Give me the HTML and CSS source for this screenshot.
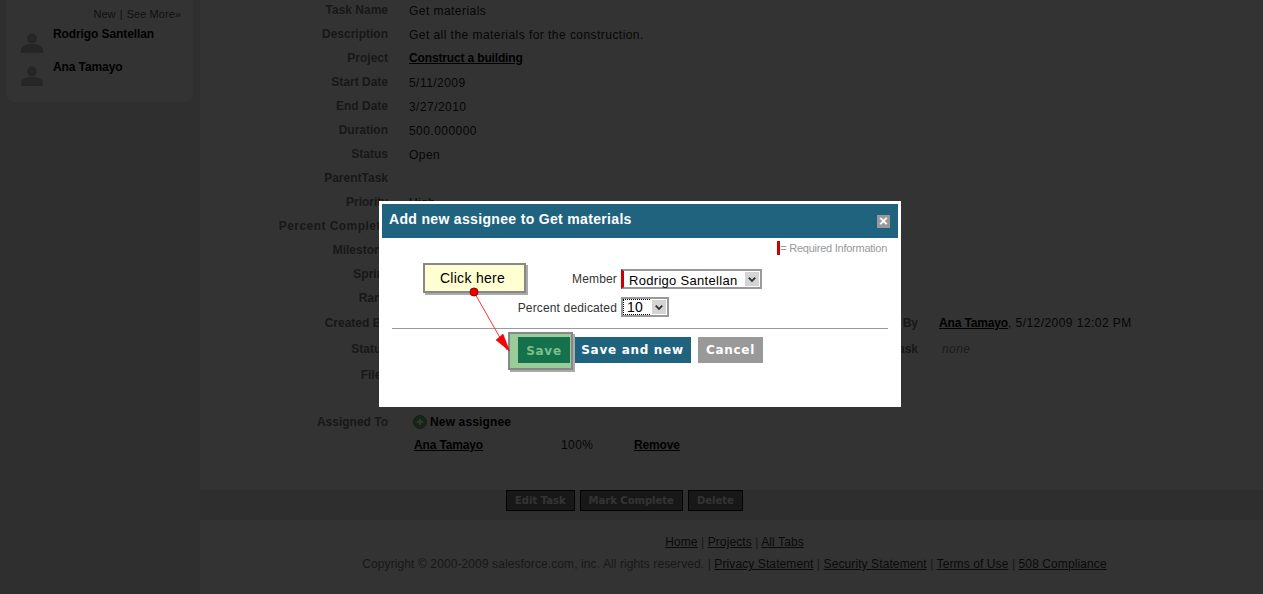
FILE: index.html
```html
<!DOCTYPE html>
<html lang="en">
<head>
<meta charset="utf-8">
<title>Get materials</title>
<link rel="stylesheet" href="styles.css">
</head>
<body>
<div class="page">
  <aside class="sidebar">
    <section class="card">
      <div class="card-links"><a>New</a> <span class="pipe">|</span> <a>See More»</a></div>
      <div class="person">
        <svg class="avatar" viewBox="0 0 24 24"><circle cx="12" cy="9.500" r="5"/><path d="M1 24v-3c0-4 4-6 11-6s11 2 11 6v3z"/></svg>
        <b>Rodrigo Santellan</b>
      </div>
      <div class="person">
        <svg class="avatar" viewBox="0 0 24 24"><circle cx="12" cy="9.500" r="5"/><path d="M1 24v-3c0-4 4-6 11-6s11 2 11 6v3z"/></svg>
        <b>Ana Tamayo</b>
      </div>
    </section>
  </aside>
  <main class="main">
    <div class="details">
      <div class="row"><span class="label">Task Name</span><span class="val">Get materials</span></div>
      <div class="row"><span class="label">Description</span><span class="val">Get all the materials for the construction.</span></div>
      <div class="row"><span class="label">Project</span><a class="link">Construct a building</a></div>
      <div class="row"><span class="label">Start Date</span><span class="val">5/11/2009</span></div>
      <div class="row"><span class="label">End Date</span><span class="val">3/27/2010</span></div>
      <div class="row"><span class="label">Duration</span><span class="val">500.000000</span></div>
      <div class="row"><span class="label">Status</span><span class="val">Open</span></div>
      <div class="row"><span class="label">ParentTask</span><span></span></div>
      <div class="row"><span class="label">Priority</span><span class="val">High</span></div>
      <div class="row"><span class="label spaced">Percent Complete</span><span></span></div>
      <div class="row"><span class="label">Milestone</span><span></span></div>
      <div class="row"><span class="label">Sprint</span><span></span></div>
      <div class="row"><span class="label">Rank</span><span></span></div>
      <div class="row tall"><span class="label">Created By</span><span></span><span class="label">Modified By</span><span><a class="link">Ana Tamayo</a>, 5/12/2009 12:02 PM</span></div>
      <div class="row tall"><span class="label">Status</span><span></span><span class="label">Parent Task</span><i class="none">none</i></div>
      <div class="row tall"><span class="label">Files</span><span></span></div>
      <div class="row assigned"><span class="label">Assigned To</span>
        <a class="new-link"><svg class="plus" viewBox="0 0 14 14"><circle cx="7" cy="7" r="6.500" class="plus-bg"/><path d="M7 4v6M4 7h6" class="plus-mark"/></svg>New assignee</a>
      </div>
      <div class="row"><span></span>
        <div class="assignee"><a class="link">Ana Tamayo</a><span>100%</span><a class="link">Remove</a></div>
      </div>
    </div>
    <div class="actions">
      <button class="action">Edit Task</button>
      <button class="action">Mark Complete</button>
      <button class="action">Delete</button>
    </div>
    <footer class="footer">
      <p><a>Home</a> | <a>Projects</a> | <a>All Tabs</a></p>
      <p>Copyright © 2000-2009 salesforce.com, inc. All rights reserved. | <a>Privacy Statement</a> | <a>Security Statement</a> | <a>Terms of Use</a> | <a>508 Compliance</a></p>
    </footer>
  </main>
</div>

<div class="overlay"></div>

<div class="modal">
  <header class="modal-head">
    <h1>Add new assignee to Get materials</h1>
    <span class="close">×</span>
  </header>
  <div class="required"><span class="req-bar"></span>= Required Information</div>
  <form class="form">
    <label class="field"><span class="field-label">Member</span>
      <span class="select member"><select><option>Rodrigo Santellan</option></select>
        <svg class="arrow" viewBox="0 0 15 15"><path d="M4 6l3.500 3.500L11 6" /></svg></span>
    </label>
    <label class="field"><span class="field-label">Percent dedicated</span>
      <span class="select percent"><select><option>10</option></select>
        <svg class="arrow" viewBox="0 0 15 15"><path d="M4 6l3.500 3.500L11 6" /></svg></span>
    </label>
    <div class="modal-buttons">
      <button type="button" class="btn save">Save</button>
      <button type="button" class="btn blue">Save and new</button>
      <button type="button" class="btn grey">Cancel</button>
    </div>
  </form>
</div>

<div class="spot"></div>
<div class="spot-text">Save</div>
<div class="callout">Click here</div>
<svg class="connector" width="60" height="75" viewBox="0 0 60 75">
  <path d="M5 4L38 62" class="conn-line"/>
  <path d="M27 52L34 46L40.500 63Z" class="conn-head"/>
  <circle cx="5" cy="4" r="4" class="conn-dot"/>
</svg>
</body>
</html>
```

FILE: styles.css
```css
* { box-sizing: border-box; }
html, body { margin: 0; height: 100%; overflow: hidden; }
body {
  font: 12px/14px "Liberation Sans", Arial, sans-serif;
  letter-spacing: .45px;
  color: #222;
  background: #fff;
}
a { color: inherit; }

.page { display: flex; height: 594px; overflow: hidden; }

.sidebar { width: 200px; flex: none; background: #ebebeb; }
.card {
  width: 187px;
  height: 102px;
  margin-left: 6px;
  padding: 7px 12px 0 14px;
  background: #fff;
  border-radius: 0 0 8px 8px;
  box-shadow: 0 0 1px #ccc;
}
.card-links { text-align: right; font-size: 11px; color: #555; letter-spacing: .05px; height: 19px; }
.pipe { margin: 0 1px; }
.person { display: flex; gap: 9px; height: 33px; font-weight: bold; color: #000; letter-spacing: -.1px; }
.person b { margin-top: 1px; }
.avatar { width: 24px; height: 24px; margin-top: 3px; fill: #bdbdbd; flex: none; }

.main { flex: 1; display: flex; flex-direction: column; min-width: 0; }
.details { margin-top: -2px; height: 492px; }
.row {
  display: grid;
  grid-template-columns: 188px 279px 209px auto;
  column-gap: 21px;
  height: 24px;
  align-items: center;
}
.row.tall { height: 26px; }
.row.assigned { margin-top: 22px; height: 23px; }
.label { text-align: right; font-weight: bold; color: #777; letter-spacing: 0; }
.label.spaced { letter-spacing: .45px; }
.val { padding-top: 2px; }
.link { font-weight: bold; color: #000; text-decoration: underline; letter-spacing: -.15px; }
.none { color: #888; padding-left: 3px; }

.new-link { display: flex; align-items: center; gap: 3px; font-weight: bold; color: #000; letter-spacing: .15px; margin-left: 4px; width: 120px; }
.plus { width: 14px; height: 14px; flex: none; }
.plus-bg { fill: #6fbf6f; stroke: #4f9f4f; }
.plus-mark { stroke: #fff; stroke-width: 2; fill: none; }
.assignee { display: grid; grid-template-columns: 147px 73px auto; margin-left: 5px; width: 300px; }

.actions {
  height: 30px;
  background: #e6e6e6;
  display: flex;
  align-items: flex-start;
  gap: 5px;
  padding-left: 306px;
}
.action {
  height: 21px;
  padding: 0 8px;
  border: 1px solid #111;
  background: #777;
  color: #fff;
  font: bold 10px/18px "DejaVu Sans", sans-serif;
  letter-spacing: 0;
}

.footer { text-align: center; color: #777; padding: 15px 0 0 6px; letter-spacing: .1px; }
.footer p { margin: 0 0 8px; }
.footer a { color: #333; text-decoration: underline; }

.overlay { position: fixed; inset: 0; background: rgba(0, 0, 0, .8); }

.modal {
  position: fixed;
  left: 379px;
  top: 201px;
  width: 522px;
  height: 206px;
  padding: 3px;
  background: #fff;
  color: #333;
}
.modal-head {
  height: 34px;
  background: #20637f;
  color: #fff;
  display: flex;
  align-items: center;
  justify-content: space-between;
  padding: 0 8px 4px 7px;
}
.modal-head h1 { margin: 0; font-size: 14px; line-height: 16px; font-weight: bold; letter-spacing: .33px; }
.close {
  width: 13px;
  height: 13px;
  margin-top: 4px;
  background: #999;
  color: #fff;
  font: bold 15px/12px "Liberation Sans", sans-serif;
  text-align: center;
  letter-spacing: 0;
}
.required {
  display: flex;
  justify-content: flex-end;
  align-items: center;
  height: 17px;
  margin-top: 1px;
  padding-right: 11px;
  font-size: 11px;
  letter-spacing: -.25px;
  color: #999;
}
.req-bar { width: 3px; height: 14px; background: #c00; }

.form { display: block; padding-top: 9px; }
.field {
  display: flex;
  align-items: center;
  height: 28px;
}
.field-label { width: 235px; text-align: right; margin-right: 4px; color: #333; letter-spacing: .15px; }
.field + .field .field-label { padding-top: 2px; }
.select {
  position: relative;
  display: block;
  height: 20px;
  border: 2px solid #999;
  background: #fff;
}
.select select {
  appearance: none;
  display: block;
  width: 100%;
  height: 17px;
  border: 0;
  outline: 0;
  background: transparent;
  color: #000;
  font: 13px/17px "Liberation Sans", sans-serif;
  letter-spacing: .3px;
  padding: 1px 0 0 5px;
  border-radius: 0;
}
.member { width: 141px; border-left: 3px solid #c00; }
.percent { width: 48px; }
.percent select { width: 29px; height: 16px; border: 1px dotted #000; padding: 0 0 0 3px; font-size: 14px; line-height: 14px; }
.arrow {
  position: absolute;
  right: 0;
  top: 0;
  width: 16px;
  height: 16px;
  background: #d4d4d4;
  border: 1px solid #fff;
  fill: none;
  stroke: #333;
  stroke-width: 2;
}

.modal-buttons {
  display: flex;
  margin-top: 16px;
  padding-left: 136px;
  position: relative;
}
.modal-buttons::before {
  content: "";
  position: absolute;
  left: 10px;
  right: 10px;
  top: -9px;
  border-top: 1px solid #999;
}
.btn {
  height: 26px;
  border: 0;
  color: #fff;
  padding: 1px 0 0;
  font: bold 12px/25px "DejaVu Sans", sans-serif;
  letter-spacing: .7px;
}
.save { width: 52px; background: #14714c; margin-right: 4px; }
.blue { width: 117px; background: #20637f; margin-right: 7px; }
.grey { width: 65px; background: #999; }

.spot {
  position: fixed;
  left: 508px;
  top: 332px;
  width: 65px;
  height: 38px;
  border: 2px solid #888;
  box-shadow: 2px 2px 0 #aaa;
  background: #9c9;
}
.spot::after {
  content: "";
  position: absolute;
  left: 8px;
  top: 3px;
  width: 52px;
  height: 26px;
  background: #14714c;
}
.spot-text {
  position: fixed;
  left: 518px;
  top: 337px;
  width: 52px;
  height: 26px;
  padding-top: 1px;
  text-align: center;
  color: #7cc08a;
  font: bold 12px/26px "DejaVu Sans", sans-serif;
  letter-spacing: .7px;
}
.callout {
  position: fixed;
  left: 423px;
  top: 263px;
  width: 103px;
  height: 30px;
  border: 2px solid #888;
  box-shadow: 2px 2px 0 #aaa;
  background: #ffffd2;
  color: #000;
  font-size: 14px;
  line-height: 26px;
  letter-spacing: .3px;
  text-align: center;
  padding-right: 4px;
}
.connector { position: fixed; left: 469px; top: 288px; overflow: visible; }
.conn-line { stroke: #f33; stroke-width: 1; fill: none; }
.conn-head { fill: #f00; stroke: #c00; stroke-width: .5; }
.conn-dot { fill: #e00; stroke: #900; stroke-width: 1; }
```
